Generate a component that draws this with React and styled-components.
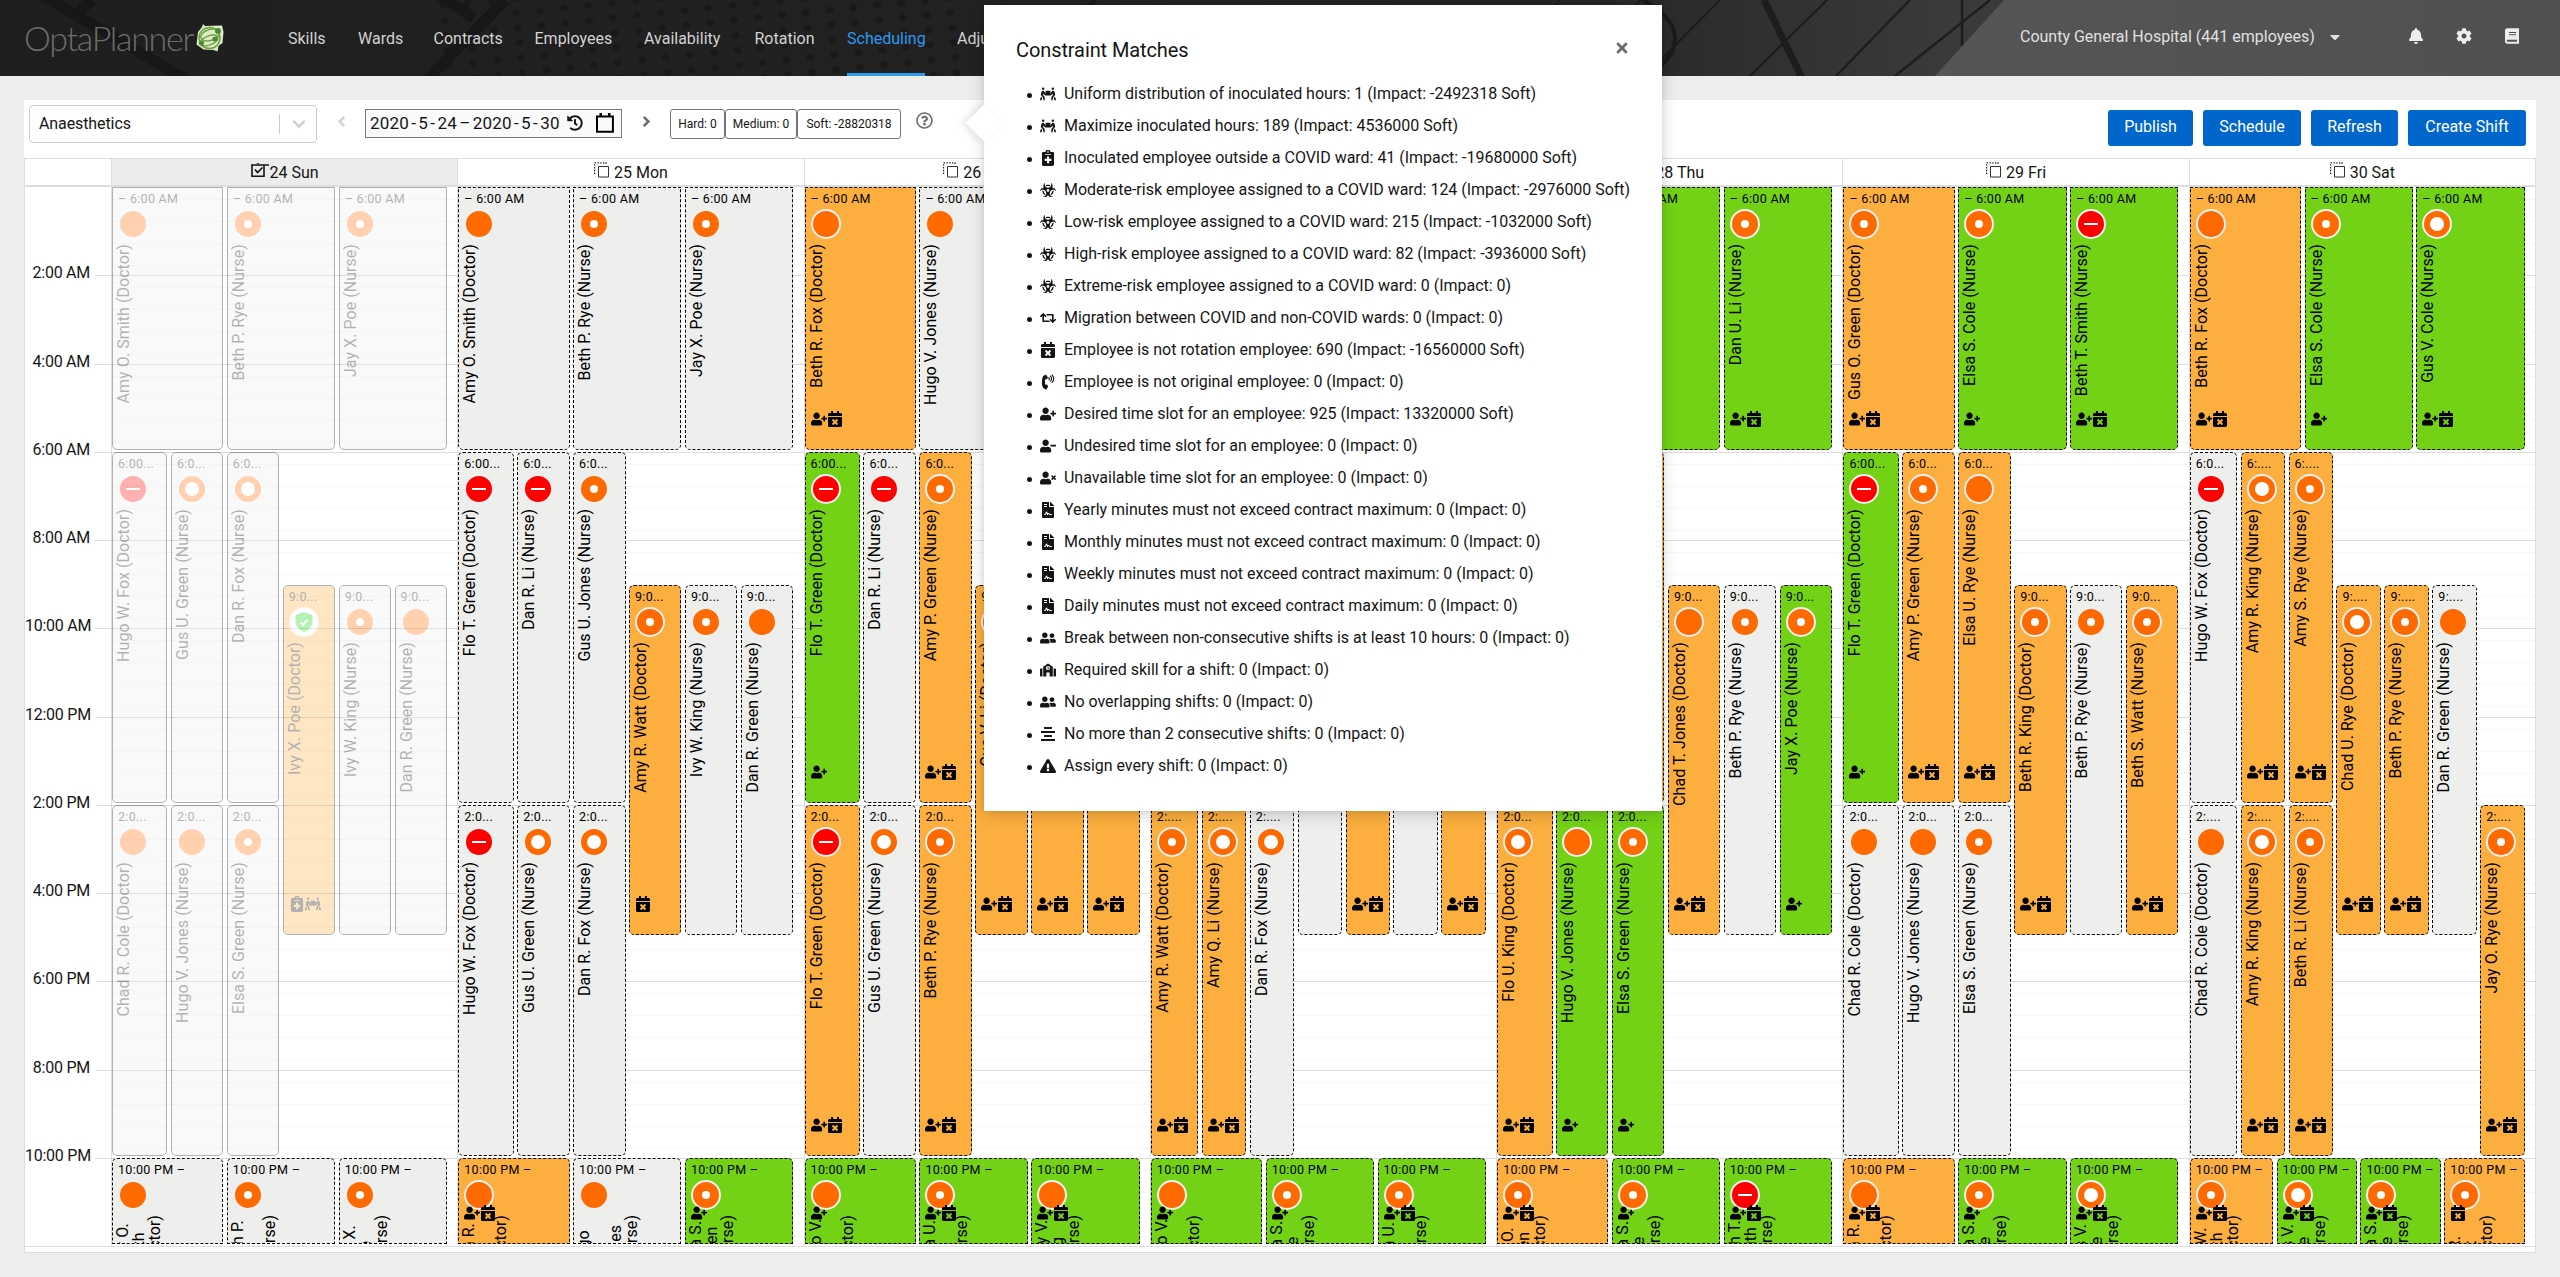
import React from "react";
import styled, { createGlobalStyle, css } from "styled-components";
import {
  FaPeopleCarry, FaBiohazard, FaRetweet, FaCalendarTimes, FaUserPlus, FaUserMinus,
  FaUserTimes, FaFileContract, FaUserFriends, FaSchool, FaAlignCenter,
  FaExclamationTriangle, FaBell, FaCog, FaTimes, FaAngleLeft, FaAngleRight,
  FaCaretDown, FaHistory, FaRegQuestionCircle,
} from "react-icons/fa";

const HOUR = 44.125;

const Global = createGlobalStyle`
  * { box-sizing: border-box; }
  body {
    margin: 0;
    background: #ededed;
    color: #151515;
    font-family: Roboto, "Liberation Sans", sans-serif;
    font-size: 16px;
    font-weight: 400;
    line-height: 24px;
    overflow: hidden;
  }
`;

/* ---------- masthead ---------- */

const Masthead = styled.header`
  position: relative;
  display: flex;
  align-items: center;
  height: 76px;
  padding-left: 24px;
  background: #1f1f1f;
  color: #d2d2d2;
`;
const Backdrop = styled.svg`
  position: absolute;
  inset: 0;
  width: 2560px;
  height: 76px;
`;
const Brand = styled.div`
  position: relative;
  display: flex;
  align-items: center;
  width: 264px;
  height: 76px;
`;
const BrandName = styled.span`
  flex: none;
  width: 172px;
  font: 300 34px/40px Lato, sans-serif;
  letter-spacing: -1.3px;
  color: #6c6c6c;
  white-space: nowrap;
`;
const Nav = styled.nav`
  position: relative;
  display: flex;
  gap: 32px;
  height: 76px;
`;
const NavItem = styled.a`
  width: ${(p) => p.$w}px;
  line-height: 78px;
  white-space: nowrap;
  color: ${(p) => (p.$active ? "#2b9af3" : "#d2d2d2")};
  box-shadow: ${(p) => (p.$active ? "inset 0 -3px #2b9af3" : "none")};
`;
const Tenant = styled.div`
  position: relative;
  display: flex;
  align-items: center;
  justify-content: space-between;
  width: 323px;
  margin-left: auto;
  padding-bottom: 3px;
  color: #e0e0e0;
  white-space: nowrap;
`;
const Tools = styled.div`
  position: relative;
  display: flex;
  gap: 32px;
  padding: 0 40px 4px 65px;
  color: #ededed;
  svg { display: block; }
`;

function HeaderArt() {
  const lines = [[1560, 1500], [1640, 1590], [1720, 1645], [1827, 1750], [1910, 1836], [1990, 1895]];
  return (
    <Backdrop viewBox="0 0 2560 76">
      <defs>
        <linearGradient id="base" x1="0" x2="1">
          <stop offset="0" stopColor="#1e1e1e" />
          <stop offset="0.6" stopColor="#242424" />
          <stop offset="0.76" stopColor="#3a3a3a" />
        </linearGradient>
        <linearGradient id="sky" x1="0" x2="1">
          <stop offset="0" stopColor="#555" />
          <stop offset="1" stopColor="#505050" />
        </linearGradient>
        <pattern id="dots" width="24" height="15" patternUnits="userSpaceOnUse" patternTransform="rotate(-6)">
          <ellipse cx="8" cy="7" rx="4" ry="3.4" fill="#191919" />
        </pattern>
      </defs>
      <rect width="2560" height="76" fill="url(#base)" />
      <rect x="440" width="520" height="76" fill="url(#dots)" />
      <g stroke="#171717" strokeWidth="11" fill="none">
        <path d="M40 -6L190 82M92 0L72 18M505 0L425 82M440 -4L474 18" />
      </g>
      <g stroke="#1a1a1a" strokeWidth="4" fill="none">
        <path d="M1095 0C1085 10 1060 20 1040 30M1620 -10C1700 20 1680 60 1640 80" />
      </g>
      <g stroke="#1d1d1d" strokeWidth="2.4">
        {lines.map(([a, b]) => <path key={a} d={`M${a} 0L${b} 76`} />)}
        <path d="M1764 0L1802 78" strokeWidth="7" />
        <path d="M1962 0V46" />
      </g>
      <path d="M2004 0H2560V76H1935Z" fill="url(#sky)" />
    </Backdrop>
  );
}

function BrandMark() {
  return (
    <svg width="28" height="30" viewBox="0 0 28 30">
      <path d="M7 1l2 2 17-.6L27.500 9l-1 11-4 3-1 5.600-4-1.600-10-.6-7-5L2 9l4-5z" fill="#dcebc8" />
      <g fill="none" stroke="#6fa243" strokeWidth="1.500">
        <circle cx="13.500" cy="15" r="10.500" />
        <ellipse cx="14" cy="12" rx="9.500" ry="5.500" transform="rotate(-18 14 12)" />
        <ellipse cx="13" cy="17.500" rx="9.500" ry="4.500" transform="rotate(-22 13 17.500)" />
      </g>
      <g fill="#4c8a35">
        <circle cx="22" cy="8" r="3" /><circle cx="19" cy="16" r="2.600" /><circle cx="5.500" cy="20" r="2.600" />
      </g>
    </svg>
  );
}

/* ---------- toolbar ---------- */

const Panel = styled.main`
  width: 2512px;
  height: 1153px;
  margin: 24px;
  background: #fff;
`;
const Toolbar = styled.div`
  display: flex;
  align-items: flex-start;
  height: 58px;
  padding: 5px 10px 0 5px;
`;
const WardSelect = styled.div`
  display: flex;
  align-items: center;
  width: 288px;
  height: 38px;
  padding: 0 10px 1px 9px;
  border: 1px solid #ccc;
  border-radius: 4px;
  letter-spacing: -0.1px;
`;
const SelectRule = styled.i`
  width: 1px;
  height: 20px;
  margin: 1px 12px 0 auto;
  background: #ccc;
`;
const StepArrow = styled.span`
  display: flex;
  justify-content: center;
  width: 48px;
  padding-top: 8px;
  color: ${(p) => (p.$off ? "#d2d2d2" : "#6a6e73")};
`;
const WeekField = styled.div`
  display: flex;
  align-items: center;
  width: 257px;
  height: 29px;
  margin-top: 4px;
  padding: 0 7px 2px 4px;
  border: 1px solid #767a7e;
  background: #fafafa;
  font-size: 17px;
  white-space: nowrap;
`;
const WeekText = styled.span`
  width: 198px;
  letter-spacing: 0.2px;
  word-spacing: -2.2px;
`;
const Scores = styled.div`
  display: flex;
  margin-top: 4px;
`;
const Score = styled.span`
  width: ${(p) => p.$w}px;
  height: 30px;
  border: 1px solid #72767b;
  border-radius: 3px;
  font-size: 12px;
  line-height: 28px;
  text-align: center;
  white-space: nowrap;
`;
const Help = styled.span`
  display: flex;
  margin: 7px 0 0 15px;
  color: #6a6e73;
`;
const Actions = styled.div`
  display: flex;
  gap: 10px;
  margin: 5px 0 0 auto;
`;
const Action = styled.button`
  width: ${(p) => p.$w}px;
  height: 36px;
  padding: 0 0 2px;
  border: 0;
  border-radius: 3px;
  background: #06c;
  color: #fff;
  font: inherit;
  white-space: nowrap;
`;

/* ---------- calendar ---------- */

const Calendar = styled.section`
  height: 1095px;
  border: 1px solid #ddd;
`;
const DayHeads = styled.div`
  display: grid;
  grid-template-columns: 86px repeat(7, 1fr);
  height: 28px;
  border-bottom: 2px solid #ddd;
`;
const DayHead = styled.div`
  display: flex;
  align-items: center;
  justify-content: center;
  gap: ${(p) => (p.$today ? 1 : 5)}px;
  padding-top: 2px;
  border-left: 1px solid #ddd;
  background: ${(p) => (p.$today ? "#ececec" : "#fff")};
  svg { margin-top: -6px; }
`;
const Body = styled.div`
  position: relative;
  height: ${HOUR * 24}px;
  border-bottom: 1px solid #ddd;
  box-sizing: content-box;
`;
const Slots = styled.div`
  display: flex;
  flex-direction: column;
`;
const SlotRow = styled.div`
  display: flex;
  height: ${HOUR * 2}px;
`;
const SlotLabel = styled.div`
  width: 70px;
  margin-top: -14px;
  padding-right: 5px;
  text-align: right;
  white-space: nowrap;
  letter-spacing: -0.25px;
`;
const SlotLines = styled.div`
  display: grid;
  flex: 1;
  grid-template-rows: 11px 22px 22px 22px 1fr;
  border-top: 1px solid ${(p) => (p.$first ? "transparent" : "#ddd")};
`;
const HalfLine = styled.i`
  margin-left: 16px;
  border-top: 1px solid #f7f7f7;
  &:first-child { border-top: 0; }
`;
const Days = styled.div`
  position: absolute;
  inset: 0 0 0 86px;
  display: grid;
  grid-template-columns: repeat(7, 1fr);
`;
const Day = styled.div`
  display: grid;
  grid-template-rows: ${HOUR * 6}px ${HOUR * 16}px ${HOUR * 2}px;
  padding-right: 10.3px;
  border-left: 1px solid #ddd;
`;
const Band = styled.div`
  display: grid;
  grid-template-columns: repeat(${(p) => p.$lanes}, minmax(0, 1fr));
  grid-template-rows: ${(p) => (p.$split ? `3fr 5fr 3fr 5fr` : "100%")};
  column-gap: 3.5px;
  padding-left: 3px;
`;
const tones = { gray: "#eeeeec", orange: "#fcaf3e", green: "#73d216" };
const Shift = styled.div`
  position: relative;
  display: flex;
  flex-direction: column;
  align-items: flex-start;
  grid-column: ${(p) => p.$lane};
  grid-row: ${(p) => p.$rows};
  margin: ${(p) => `0.4px 0 ${p.$edge === "late" ? 2.4 : 1.8}px ${p.$lane === 1 ? -3 : 0}px`};
  padding: 0 0 0 5px;
  overflow: hidden;
  border: 1px ${(p) => (p.$published ? "solid" : "dashed")} #000;
  border-radius: ${(p) => ({ night: "0 0 5px 5px", late: "5px 5px 0 0" }[p.$edge] || "5px")};
  background: ${(p) => tones[p.$tone]};
  color: #000;
  opacity: ${(p) => (p.$published ? 0.3 : 1)};
`;
const ShiftTime = styled.div`
  height: 21px;
  font-size: 12.5px;
  line-height: 22px;
  white-space: nowrap;
  letter-spacing: 0.3px;
`;
const Risk = styled.i`
  display: grid;
  flex: none;
  place-items: center;
  width: 30px;
  height: 30px;
  border: 2px solid #f0f0f0;
  border-radius: 50%;
  background: ${(p) => ({ high: "#ff0000", shield: "#fff" }[p.$kind] || "#ff6a00")};
  &::after {
    content: "";
    ${(p) => p.$kind === "dot" && css`width: 8px; height: 8px; border-radius: 50%; background: #fff;`}
    ${(p) => p.$kind === "ring" && css`width: 14px; height: 14px; border-radius: 50%; background: #fff;`}
    ${(p) => p.$kind === "high" && css`width: 14px; height: 2px; background: #fff;`}
    ${(p) => p.$kind === "shield" && css`display: none;`}
  }
`;
const ShiftName = styled.div`
  flex: none;
  margin: 5px 0 0 -3px;
  writing-mode: vertical-rl;
  transform: rotate(180deg);
  line-height: ${(p) => (p.$wrapped ? 16 : 18)}px;
  letter-spacing: 0.05px;
  white-space: nowrap;
  span { display: block; }
`;
const ShiftIcons = styled.div`
  position: absolute;
  left: 5px;
  bottom: 22px;
  display: flex;
`;

/* ---------- popover ---------- */

const Popover = styled.aside`
  position: absolute;
  left: 984px;
  top: 5px;
  width: 678px;
  height: 806px;
  padding: 33px 32px;
  background: #fff;
  box-shadow: 0 4px 16px rgba(3, 3, 3, 0.16), 0 0 6px rgba(3, 3, 3, 0.08);
  &::before {
    content: "";
    position: absolute;
    left: -13px;
    top: 105px;
    width: 26px;
    height: 26px;
    background: #fff;
    transform: rotate(45deg);
    box-shadow: -3px 3px 8px rgba(3, 3, 3, 0.1);
  }
`;
const PopHead = styled.div`
  position: relative;
  display: flex;
  justify-content: space-between;
  color: #6a6e73;
  > svg { margin-top: 2px; }
`;
const PopTitle = styled.h1`
  margin: 0;
  font-size: 20px;
  font-weight: inherit;
  line-height: 25px;
  letter-spacing: -0.1px;
  color: #151515;
`;
const Matches = styled.ul`
  position: relative;
  margin: 15px 0 0;
  padding: 0;
  list-style: none;
  background: #fff;
`;
const Match = styled.li`
  display: flex;
  align-items: center;
  height: 32px;
  padding-left: 11px;
  white-space: nowrap;
  svg { flex: none; margin: 0 8px 0 8px; }
  &::before {
    content: "";
    flex: none;
    width: 5px;
    height: 5px;
    margin-top: 2px;
    border-radius: 50%;
    background: #151515;
  }
`;
const MatchText = styled.span`
  letter-spacing: -0.02px;
`;

/* ---------- small drawings ---------- */

function ClipboardPlus() {
  return (
    <svg width="16" height="16" viewBox="0 0 16 16">
      <path fillRule="evenodd" fill="currentColor" d="M3.500 2H5.500a2.500 2.200 0 0 1 5 0H12.500A1.200 1.200 0 0 1 14 3.400V14.600A1.400 1.400 0 0 1 12.600 16H3.400A1.400 1.400 0 0 1 2 14.600V3.400A1.400 1.400 0 0 1 3.500 2ZM8 1.200a.8.800 0 1 0 0 1.600.8.800 0 0 0 0-1.600ZM7 6.500V8.800H4.700V10.900H7V13.200H9.100V10.900H11.400V8.800H9.100V6.500ZM5 3.900V4.700H11V3.900Z" />
    </svg>
  );
}
function PhoneVolume() {
  return (
    <svg width="16" height="16" viewBox="0 0 16 16">
      <path fill="currentColor" d="M5.800.6 3.300 1.900C1.500 4.200 1.500 11.800 3.300 14.100L6.300 15.700 8.300 12.300 6.800 10.600 5.500 10.700C4.800 9 4.800 6.600 5.500 5L6.900 5.200 8 3.500Z" />
      <g fill="none" stroke="currentColor" strokeWidth="1.100" strokeLinecap="round">
        <path d="M8.800 3.500Q9.800 4.600 8.900 6M10.500 2.200Q12.500 4.500 10.600 7.200M12 .8Q15.300 4.500 12.100 8.500" />
      </g>
    </svg>
  );
}
function Book() {
  return (
    <svg width="16" height="16" viewBox="0 0 16 16">
      <path fillRule="evenodd" fill="currentColor" d="M3.500.200H15V15.800H3.500A2.500 2.500 0 0 1 1 13.300V2.700A2.500 2.500 0 0 1 3.500.200ZM5 4V5H12V4ZM5 6.300V7.300H12V6.300ZM3.700 11.800a1 1 0 0 0 0 2H13V11.800Z" />
    </svg>
  );
}
function PublishedMark() {
  return (
    <svg width="18" height="17" viewBox="0 0 18 17">
      <g fill="none" stroke="#151515" strokeWidth="1.600">
        <path d="M1 3.500V14.200H13V3.500M0 3H18M4 7.500L6.500 10.500L11.500 5.500" />
      </g>
      <path d="M4 3.800V2.200H5.200A2 2 0 0 1 8.800 2.200H10V3.800Z" fill="#444" />
    </svg>
  );
}
function DraftMark() {
  return (
    <svg width="15" height="16" viewBox="0 0 15 16">
      <path d="M4.500 4.500H14.500V15H4.500Z" fill="none" stroke="#333" strokeWidth="1" />
      <path d="M.6 12V.8H12V3" fill="none" stroke="#222" strokeWidth="1.200" strokeDasharray="1.400 1.400" />
    </svg>
  );
}
function CalendarOutline() {
  return (
    <svg width="18" height="20" viewBox="0 0 18 20">
      <path d="M1 3.500H17V18.800H1Z" fill="none" stroke="#000" strokeWidth="2" />
      <path d="M3.500 0H6V4H3.500ZM12 0H14.500V4H12Z" fill="#000" />
    </svg>
  );
}
function Shield() {
  return (
    <svg width="20" height="20" viewBox="0 0 20 20">
      <path d="M10 0 18.500 3V9.500C18.500 14.500 14 18.500 10 20 6 18.500 1.500 14.500 1.500 9.500V3Z" fill="#12dd12" />
      <path d="M6.500 10.500 9 13 13.500 7.500" fill="none" stroke="#fff" strokeWidth="2" />
    </svg>
  );
}

/* ---------- data ---------- */

const nav = [
  ["Skills", 38], ["Wards", 43.5], ["Contracts", 69], ["Employees", 77.5],
  ["Availability", 78.5], ["Rotation", 60.5], ["Scheduling", 78], ["Adjustments", 90],
];

const matches = [
  [FaPeopleCarry, "Uniform distribution of inoculated hours: 1 (Impact: -2492318 Soft)"],
  [FaPeopleCarry, "Maximize inoculated hours: 189 (Impact: 4536000 Soft)"],
  [ClipboardPlus, "Inoculated employee outside a COVID ward: 41 (Impact: -19680000 Soft)"],
  [FaBiohazard, "Moderate-risk employee assigned to a COVID ward: 124 (Impact: -2976000 Soft)"],
  [FaBiohazard, "Low-risk employee assigned to a COVID ward: 215 (Impact: -1032000 Soft)"],
  [FaBiohazard, "High-risk employee assigned to a COVID ward: 82 (Impact: -3936000 Soft)"],
  [FaBiohazard, "Extreme-risk employee assigned to a COVID ward: 0 (Impact: 0)"],
  [FaRetweet, "Migration between COVID and non-COVID wards: 0 (Impact: 0)"],
  [FaCalendarTimes, "Employee is not rotation employee: 690 (Impact: -16560000 Soft)"],
  [PhoneVolume, "Employee is not original employee: 0 (Impact: 0)"],
  [FaUserPlus, "Desired time slot for an employee: 925 (Impact: 13320000 Soft)"],
  [FaUserMinus, "Undesired time slot for an employee: 0 (Impact: 0)"],
  [FaUserTimes, "Unavailable time slot for an employee: 0 (Impact: 0)"],
  [FaFileContract, "Yearly minutes must not exceed contract maximum: 0 (Impact: 0)"],
  [FaFileContract, "Monthly minutes must not exceed contract maximum: 0 (Impact: 0)"],
  [FaFileContract, "Weekly minutes must not exceed contract maximum: 0 (Impact: 0)"],
  [FaFileContract, "Daily minutes must not exceed contract maximum: 0 (Impact: 0)"],
  [FaUserFriends, "Break between non-consecutive shifts is at least 10 hours: 0 (Impact: 0)"],
  [FaSchool, "Required skill for a shift: 0 (Impact: 0)"],
  [FaUserFriends, "No overlapping shifts: 0 (Impact: 0)"],
  [FaAlignCenter, "No more than 2 consecutive shifts: 0 (Impact: 0)"],
  [FaExclamationTriangle, "Assign every shift: 0 (Impact: 0)"],
];

const icons = { u: FaUserPlus, c: FaCalendarTimes, k: ClipboardPlus, p: FaPeopleCarry };

// tone, risk, name, icon codes
const s = (tone, risk, name, marks = "", time) => ({ tone, risk, name, marks, time });
const G = "gray", O = "orange", V = "green";

const week = [
  {
    label: "24 Sun", lanes: 6, published: true,
    night: [s(G, "full", "Amy O. Smith (Doctor)"), s(G, "dot", "Beth P. Rye (Nurse)"), s(G, "dot", "Jay X. Poe (Nurse)")],
    early: [s(G, "high", "Hugo W. Fox (Doctor)", "", "6:00..."), s(G, "ring", "Gus U. Green (Nurse)"), s(G, "ring", "Dan R. Fox (Nurse)")],
    mid: [s(O, "shield", "Ivy X. Poe (Doctor)", "kp"), s(G, "dot", "Ivy W. King (Nurse)"), s(G, "full", "Dan R. Green (Nurse)")],
    noon: [s(G, "full", "Chad R. Cole (Doctor)"), s(G, "full", "Hugo V. Jones (Nurse)"), s(G, "dot", "Elsa S. Green (Nurse)")],
    late: [s(G, "full", "Amy O.|Smith|(Doctor)"), s(G, "dot", "Beth P.|Rye|(Nurse)"), s(G, "dot", "Jay X.|Poe|(Nurse)")],
  },
  {
    label: "25 Mon", lanes: 6,
    night: [s(G, "full", "Amy O. Smith (Doctor)"), s(G, "dot", "Beth P. Rye (Nurse)"), s(G, "dot", "Jay X. Poe (Nurse)")],
    early: [s(G, "high", "Flo T. Green (Doctor)", "", "6:00..."), s(G, "high", "Dan R. Li (Nurse)"), s(G, "dot", "Gus U. Jones (Nurse)")],
    mid: [s(O, "dot", "Amy R. Watt (Doctor)", "c"), s(G, "dot", "Ivy W. King (Nurse)"), s(G, "full", "Dan R. Green (Nurse)")],
    noon: [s(G, "high", "Hugo W. Fox (Doctor)"), s(G, "ring", "Gus U. Green (Nurse)"), s(G, "ring", "Dan R. Fox (Nurse)")],
    late: [s(O, "full", "Beth R.|Fox|(Doctor)", "uc"), s(G, "full", "Hugo|V.|Jones|(Nurse)"), s(V, "dot", "Elsa S.|Green|(Nurse)", "u")],
  },
  {
    label: "26 Tue", lanes: 6,
    night: [s(O, "full", "Beth R. Fox (Doctor)", "uc"), s(G, "full", "Hugo V. Jones (Nurse)"), s(V, "dot", "")],
    early: [s(V, "high", "Flo T. Green (Doctor)", "u", "6:00..."), s(G, "high", "Dan R. Li (Nurse)"), s(O, "dot", "Amy P. Green (Nurse)", "uc")],
    mid: [s(O, "dot", "Gus V. Li (Doctor)", "uc"), s(O, "dot", "", "uc"), s(O, "dot", "", "uc")],
    noon: [s(O, "high", "Flo T. Green (Doctor)", "uc"), s(G, "ring", "Gus U. Green (Nurse)"), s(O, "dot", "Beth P. Rye (Nurse)", "uc")],
    late: [s(V, "full", "Hugo V.|Li|(Doctor)", "u"), s(V, "dot", "Elsa U.|Rye|(Nurse)", "uc"), s(V, "full", "Amy V.|King|(Nurse)", "uc")],
  },
  {
    label: "27 Wed", lanes: 7,
    night: [s(V, "full", ""), s(V, "dot", ""), s(V, "full", "")],
    early: [s(G, "full", ""), s(G, "full", ""), s(G, "full", "")],
    mid: [s(G, "full", ""), s(O, "full", "", "uc"), s(G, "full", ""), s(O, "full", "", "uc")],
    noon: [s(O, "dot", "Amy R. Watt (Doctor)", "uc"), s(O, "ring", "Amy Q. Li (Nurse)", "uc"), s(G, "ring", "Dan R. Fox (Nurse)")],
    noonTime: "2:....",
    late: [s(V, "full", "Hugo V.|Li|(Doctor)", "u"), s(V, "dot", "Elsa S.|Cole|(Nurse)", "u"), s(V, "dot", "Dan U.|Li|(Nurse)", "uc")],
  },
  {
    label: "28 Thu", lanes: 6,
    night: [s(V, "full", ""), s(V, "dot", "Elsa S. Cole (Nurse)"), s(V, "dot", "Dan U. Li (Nurse)", "uc")],
    early: [s(O, "full", ""), s(O, "full", ""), s(O, "full", "")],
    mid: [s(O, "full", "Chad T. Jones (Doctor)", "uc"), s(G, "dot", "Beth P. Rye (Nurse)"), s(V, "dot", "Jay X. Poe (Nurse)", "u")],
    noon: [s(O, "ring", "Flo U. King (Doctor)", "uc"), s(V, "full", "Hugo V. Jones (Nurse)", "u"), s(V, "dot", "Elsa S. Green (Nurse)", "u")],
    late: [s(O, "dot", "Gus O.|Green|(Doctor)", "uc"), s(V, "dot", "Elsa S.|Cole|(Nurse)", "u"), s(V, "high", "Beth T.|Smith|(Nurse)", "uc")],
  },
  {
    label: "29 Fri", lanes: 6,
    night: [s(O, "dot", "Gus O. Green (Doctor)", "uc"), s(V, "dot", "Elsa S. Cole (Nurse)", "u"), s(V, "high", "Beth T. Smith (Nurse)", "uc")],
    early: [s(V, "high", "Flo T. Green (Doctor)", "u", "6:00..."), s(O, "dot", "Amy P. Green (Nurse)", "uc"), s(O, "full", "Elsa U. Rye (Nurse)", "uc")],
    mid: [s(O, "dot", "Beth R. King (Doctor)", "uc"), s(G, "dot", "Beth P. Rye (Nurse)"), s(O, "dot", "Beth S. Watt (Nurse)", "uc")],
    noon: [s(G, "full", "Chad R. Cole (Doctor)"), s(G, "full", "Hugo V. Jones (Nurse)"), s(G, "dot", "Elsa S. Green (Nurse)")],
    late: [s(O, "full", "Beth R.|Fox|(Doctor)", "uc"), s(V, "dot", "Elsa S.|Cole|(Nurse)", "u"), s(V, "ring", "Gus V.|Cole|(Nurse)", "uc")],
  },
  {
    label: "30 Sat", lanes: 7,
    night: [s(O, "full", "Beth R. Fox (Doctor)", "uc"), s(V, "dot", "Elsa S. Cole (Nurse)", "u"), s(V, "ring", "Gus V. Cole (Nurse)", "uc")],
    early: [s(G, "high", "Hugo W. Fox (Doctor)"), s(O, "ring", "Amy R. King (Nurse)", "uc", "6:...."), s(O, "dot", "Amy S. Rye (Nurse)", "uc", "6:....")],
    mid: [s(O, "ring", "Chad U. Rye (Doctor)", "uc"), s(O, "dot", "Beth P. Rye (Nurse)", "uc"), s(G, "full", "Dan R. Green (Nurse)")],
    midTime: "9:....",
    noon: [s(G, "full", "Chad R. Cole (Doctor)"), s(O, "ring", "Amy R. King (Nurse)", "uc"), s(O, "dot", "Beth R. Li (Nurse)", "uc"), s(O, "dot", "Jay O. Rye (Nurse)", "uc")],
    noonTime: "2:....",
    noonLanes: [1, 2, 3, 7],
    late: [s(O, "dot", "Jay W.|Smith|(Doctor)", "uc"), s(V, "ring", "Gus V.|Cole|(Nurse)", "uc"), s(V, "dot", "Elsa S.|Cole|(Nurse)", "uc"), s(O, "dot", "Ivy R.|Watt|(Doctor)", "c")],
  },
];

const hours = ["", "2:00 AM", "4:00 AM", "6:00 AM", "8:00 AM", "10:00 AM", "12:00 PM", "2:00 PM", "4:00 PM", "6:00 PM", "8:00 PM", "10:00 PM"];

/* ---------- composition ---------- */

function ShiftCard({ shift, lane, rows, time, edge, published }) {
  const lines = shift.name.split("|");
  return (
    <Shift $lane={lane} $rows={rows} $tone={shift.tone} $edge={edge} $published={published}>
      {shift.name && (
        <>
          <ShiftTime>{shift.time || time}</ShiftTime>
          <Risk $kind={shift.risk}>{shift.risk === "shield" && <Shield />}</Risk>
          <ShiftName $wrapped={lines.length > 1}>
            {lines.map((line) => <span key={line}>{line}</span>)}
          </ShiftName>
        </>
      )}
      <ShiftIcons>
        {[...shift.marks].map((m) => {
          const Icon = icons[m];
          return <Icon key={m} />;
        })}
      </ShiftIcons>
    </Shift>
  );
}

function DayColumn({ day }) {
  const p = day.published;
  return (
    <Day>
      <Band $lanes={day.night.length}>
        {day.night.map((x, i) => <ShiftCard key={i} shift={x} lane={i + 1} rows="1" edge="night" time="– 6:00 AM" published={p} />)}
      </Band>
      <Band $lanes={day.lanes} $split>
        {day.early.map((x, i) => <ShiftCard key={"e" + i} shift={x} lane={i + 1} rows="1 / 3" time="6:0..." published={p} />)}
        {day.mid.map((x, i) => <ShiftCard key={"m" + i} shift={x} lane={i + 4} rows="2 / 4" time={day.midTime || "9:0..."} published={p} />)}
        {day.noon.map((x, i) => (
          <ShiftCard key={"n" + i} shift={x} lane={day.noonLanes ? day.noonLanes[i] : i + 1} rows="3 / 5" time={day.noonTime || "2:0..."} published={p} />
        ))}
      </Band>
      <Band $lanes={day.late.length}>
        {day.late.map((x, i) => <ShiftCard key={i} shift={x} lane={i + 1} rows="1" edge="late" time="10:00 PM –" />)}
      </Band>
    </Day>
  );
}

export default function App() {
  return (
    <>
      <Global />
      <Masthead>
        <HeaderArt />
        <Brand><BrandName>OptaPlanner</BrandName><BrandMark /></Brand>
        <Nav>
          {nav.map(([label, w]) => <NavItem key={label} $w={w} $active={label === "Scheduling"}>{label}</NavItem>)}
        </Nav>
        <Tenant>County General Hospital (441 employees)<FaCaretDown size={16} /></Tenant>
        <Tools><FaBell size={16} /><FaCog size={16} /><Book /></Tools>
      </Masthead>
      <Panel>
        <Toolbar>
          <WardSelect>
            Anaesthetics
            <SelectRule />
            <svg width="14" height="10" viewBox="0 0 14 10"><path d="M2 2.500L7 7.500L12 2.500" fill="none" stroke="#ccc" strokeWidth="2.400" strokeLinecap="round" /></svg>
          </WardSelect>
          <StepArrow $off><FaAngleLeft size={17} /></StepArrow>
          <WeekField>
            <WeekText>2020 - 5 - 24 – 2020 - 5 - 30</WeekText>
            <FaHistory size={16} />
            <svg width="13" height="1" />
            <CalendarOutline />
          </WeekField>
          <StepArrow><FaAngleRight size={17} /></StepArrow>
          <Scores>
            <Score $w={55}>Hard: 0</Score>
            <Score $w={72}>Medium: 0</Score>
            <Score $w={104}>Soft: -28820318</Score>
          </Scores>
          <Help><FaRegQuestionCircle size={17} /></Help>
          <Actions>
            <Action $w={85}>Publish</Action>
            <Action $w={98}>Schedule</Action>
            <Action $w={87}>Refresh</Action>
            <Action $w={118}>Create Shift</Action>
          </Actions>
        </Toolbar>
        <Calendar>
          <DayHeads>
            <span />
            {week.map((d) => (
              <DayHead key={d.label} $today={d.published}>
                {d.published ? <PublishedMark /> : <DraftMark />}{d.label}
              </DayHead>
            ))}
          </DayHeads>
          <Body>
            <Slots>
              {hours.map((h, i) => (
                <SlotRow key={i}>
                  <SlotLabel>{h}</SlotLabel>
                  <SlotLines $first={i === 0}>
                    <HalfLine /><HalfLine /><HalfLine /><HalfLine /><HalfLine />
                  </SlotLines>
                </SlotRow>
              ))}
            </Slots>
            <Days>{week.map((d) => <DayColumn key={d.label} day={d} />)}</Days>
          </Body>
        </Calendar>
      </Panel>
      <Popover>
        <PopHead><PopTitle>Constraint Matches</PopTitle><FaTimes size={16} /></PopHead>
        <Matches>
          {matches.map(([Icon, text]) => (
            <Match key={text}><Icon size={16} /><MatchText>{text}</MatchText></Match>
          ))}
        </Matches>
      </Popover>
    </>
  );
}
